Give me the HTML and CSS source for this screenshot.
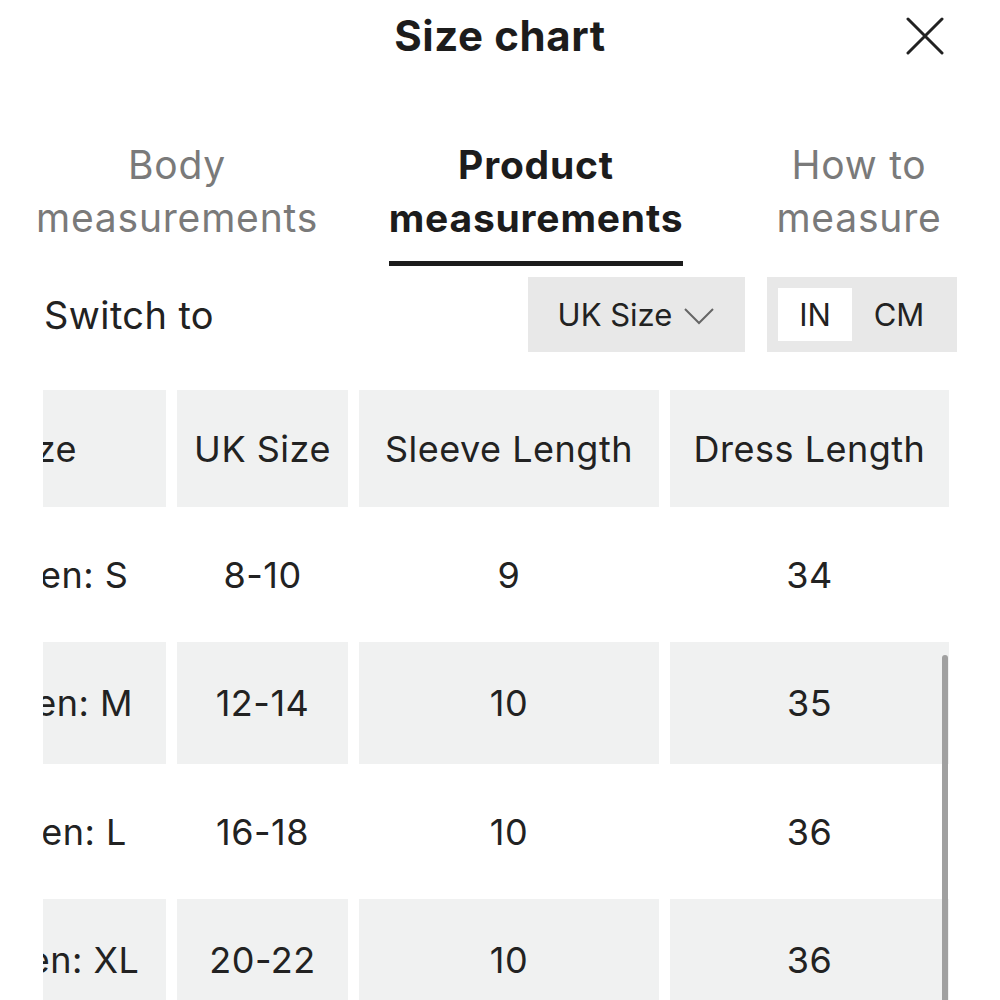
FILE: index.html
```html
<!DOCTYPE html>
<html lang="en">
<head>
<meta charset="utf-8">
<title>Size chart</title>
<link rel="stylesheet" href="styles.css">
</head>
<body>
<div class="modal">
  <header class="head">
    <span class="head-spacer"></span>
    <h1 class="title">Size chart</h1>
    <button class="close" aria-label="Close">
      <svg viewBox="0 0 38 38" width="38" height="38"><path d="M2 2L36 36M36 2L2 36" fill="none" stroke="#222" stroke-width="3" stroke-linecap="round"/></svg>
    </button>
  </header>

  <nav class="tabs">
    <div class="tab"><span class="tab-label">Body<br>measurements</span></div>
    <div class="tab active"><span class="tab-label">Product<br>measurements</span></div>
    <div class="tab"><span class="tab-label">How to<br>measure</span></div>
  </nav>

  <div class="controls">
    <span class="switch">Switch to</span>
    <div class="dropdown">
      <span>UK Size</span>
      <svg class="chev" viewBox="0 0 32 18" width="32" height="18"><path d="M2 2L16 16L30 2" fill="none" stroke="#666" stroke-width="2"/></svg>
    </div>
    <div class="units">
      <span class="unit unit-in on">IN</span>
      <span class="unit unit-cm">CM</span>
    </div>
  </div>

  <div class="table-wrap">
    <div class="grid">
      <div class="cell first shade">Size</div>
      <div class="cell shade">UK Size</div>
      <div class="cell shade">Sleeve Length</div>
      <div class="cell shade">Dress Length</div>

      <div class="cell first">Women: S</div>
      <div class="cell">8-10</div>
      <div class="cell">9</div>
      <div class="cell">34</div>

      <div class="cell first shade">Women: M</div>
      <div class="cell shade">12-14</div>
      <div class="cell shade">10</div>
      <div class="cell shade">35</div>

      <div class="cell first">Women: L</div>
      <div class="cell">16-18</div>
      <div class="cell">10</div>
      <div class="cell">36</div>

      <div class="cell first shade">Women: XL</div>
      <div class="cell shade">20-22</div>
      <div class="cell shade">10</div>
      <div class="cell shade">36</div>
    </div>
    <div class="scrollbar"></div>
  </div>
</div>
</body>
</html>
```

FILE: styles.css
```css
html, body {
  margin: 0;
  padding: 0;
  overflow: hidden;
  background: #fff;
}

body {
  font-family: "Inter", "Noto Sans", sans-serif;
  color: #222;
}

.modal {
  width: 1000px;
  height: 1000px;
  overflow: hidden;
}

.head {
  display: grid;
  grid-template-columns: 1fr auto 1fr;
  align-items: center;
  height: 72px;
}

.title {
  margin: 0;
  font-size: 42px;
  font-weight: 700;
  letter-spacing: 0.6px;
  line-height: 72px;
  color: #1c1c1c;
}

.close {
  justify-self: end;
  margin-right: 56px;
  padding: 0;
  border: 0;
  background: none;
  width: 38px;
  height: 38px;
  display: flex;
}

.tabs {
  display: grid;
  grid-template-columns: 354px 364px 1fr;
  align-items: start;
  margin-top: 66px;
}

.tab {
  text-align: center;
  font-size: 39px;
  letter-spacing: 0.8px;
  line-height: 53px;
  color: #7a7a7a;
}

.tab-label {
  display: inline-block;
  padding-bottom: 17px;
}

.tab.active {
  color: #1c1c1c;
  font-weight: 700;
}

.tab.active .tab-label {
  border-bottom: 5px solid #1c1c1c;
}

.controls {
  display: flex;
  align-items: center;
  margin-top: 11px;
  padding: 0 43px 0 44px;
  height: 75px;
}

.switch {
  flex: 1;
  font-size: 38px;
  letter-spacing: 0.4px;
  color: #222;
}

.dropdown {
  width: 217px;
  height: 75px;
  background: #e8e8e8;
  display: flex;
  align-items: center;
  justify-content: center;
  gap: 11px;
  font-size: 31px;
}

.chev {
  margin-top: 2px;
}

.units {
  margin-left: 22px;
  height: 75px;
  box-sizing: border-box;
  padding: 11px;
  background: #e8e8e8;
  display: flex;
}

.unit {
  display: flex;
  align-items: center;
  justify-content: center;
  font-size: 31px;
}

.unit-in { width: 74px; }
.unit-cm { width: 94px; }

.unit.on {
  background: #fff;
}

.table-wrap {
  position: relative;
  margin-top: 38px;
  margin-left: 43px;
  width: 908px;
  height: 610px;
  overflow: hidden;
}

.grid {
  display: grid;
  grid-template-columns: 264px 171px 300px 279px;
  grid-template-rows: 117px repeat(4, 122px);
  column-gap: 11px;
  row-gap: 6.5px;
  margin-left: -141px;
  width: max-content;
}

.cell {
  display: flex;
  align-items: center;
  justify-content: center;
  font-size: 36px;
  letter-spacing: 0.5px;
  color: #222;
  white-space: nowrap;
}

.cell.first {
  padding-left: 12px;
}

.cell.shade {
  background: #f0f1f1;
}

.scrollbar {
  position: absolute;
  left: 899px;
  top: 265px;
  bottom: 0;
  width: 6px;
  background: #a0a0a0;
  border-radius: 3px 3px 0 0;
}
```
